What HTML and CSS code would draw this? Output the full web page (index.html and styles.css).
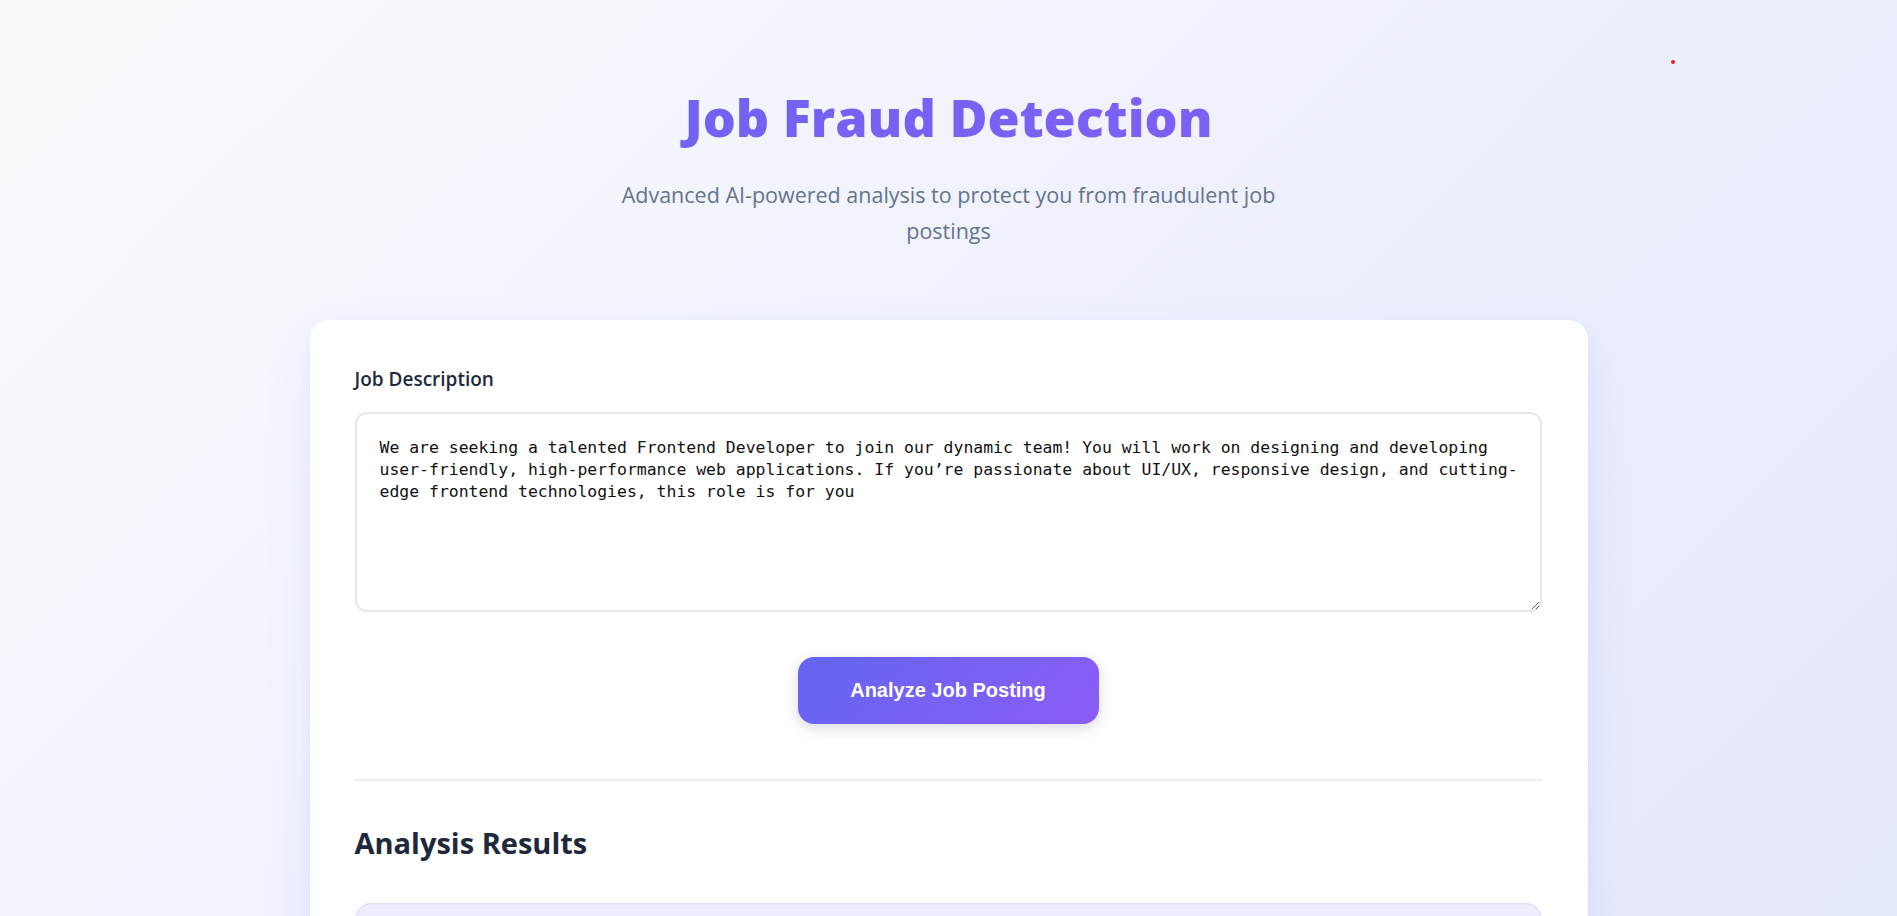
FILE: index.html
```html
<!DOCTYPE html>
<html lang="en">
<head>
<meta charset="utf-8">
<title>Job Fraud Detection</title>
<link rel="stylesheet" href="styles.css">
</head>
<body>
<span class="dot"></span>
<main class="page">
  <header class="hero">
    <h1 class="title">Job Fraud Detection</h1>
    <p class="subtitle">Advanced AI-powered analysis to protect you from fraudulent job postings</p>
  </header>
  <section class="card">
    <label class="label" for="desc">Job Description</label>
    <textarea id="desc" class="input">We are seeking a talented Frontend Developer to join our dynamic team! You will work on designing and developing user-friendly, high-performance web applications. If you’re passionate about UI/UX, responsive design, and cutting-edge frontend technologies, this role is for you</textarea>
    <div class="actions">
      <button class="btn" type="button">Analyze Job Posting</button>
    </div>
    <hr class="sep">
    <h2 class="results-title">Analysis Results</h2>
    <div class="result-box"></div>
  </section>
</main>
</body>
</html>
```

FILE: styles.css
```css
* { box-sizing: border-box; }
html, body { margin: 0; padding: 0; }
body {
  min-height: 100vh;
  font-family: "Open Sans", "Noto Sans", sans-serif;
  background: linear-gradient(135deg, #fafbfe 0%, #eff2fc 45%, #e4e8fc 100%);
  overflow: hidden;
}
.dot {
  position: absolute;
  left: 1671px;
  top: 60px;
  width: 4px;
  height: 4px;
  border-radius: 50%;
  background: #e81e1e;
}
.page {
  display: flex;
  flex-direction: column;
  align-items: center;
  padding-top: 86px;
}
.hero {
  width: 100%;
  display: flex;
  flex-direction: column;
  align-items: center;
}
.title {
  margin: 0;
  width: 100%;
  text-align: center;
  font-size: 52px;
  font-weight: 800;
  line-height: 62px;
  background: linear-gradient(135deg, #6366f1, #8b5cf6);
  -webkit-background-clip: text;
  background-clip: text;
  color: transparent;
}
.subtitle {
  margin: 29px 0 0;
  max-width: 700px;
  text-align: center;
  font-size: 21.5px;
  line-height: 36px;
  color: #64748b;
}
.card {
  margin-top: 71px;
  width: 1278px;
  background: rgba(255, 255, 255, 0.92);
  border-radius: 20px;
  box-shadow: 0 20px 50px rgba(99, 102, 241, 0.10), 0 4px 12px rgba(99, 102, 241, 0.05);
  padding: 46px 46px 40px 45px;
  display: flex;
  flex-direction: column;
}
.label {
  font-size: 19px;
  font-weight: 600;
  color: #1e293b;
  line-height: 26px;
  margin-bottom: 20px;
}
.input {
  display: block;
  width: 100%;
  height: 200px;
  border: 2px solid #e2e8f0;
  border-radius: 12px;
  padding: 23px 19px 20px 23px;
  font-family: "DejaVu Sans Mono", "Liberation Mono", monospace;
  font-size: 16.44px;
  line-height: 22.2px;
  color: #111;
  background: #fff;
  resize: vertical;
  outline: none;
}
.actions {
  display: flex;
  justify-content: center;
  margin-top: 45px;
}
.btn {
  width: 301px;
  height: 67px;
  border: none;
  border-radius: 16px;
  background: linear-gradient(135deg, #6366f1, #8b5cf6);
  color: #fff;
  font-family: "Liberation Sans", Arial, sans-serif;
  font-size: 20px;
  font-weight: 700;
  box-shadow: 0 4px 12px rgba(60, 60, 110, 0.18);
  cursor: pointer;
}
.sep {
  margin: 55px 0 0;
  border: none;
  border-top: 2px solid #efedfd;
}
.results-title {
  margin: 42px 0 0;
  font-size: 29px;
  font-weight: 700;
  color: #1e293b;
  line-height: 40px;
}
.result-box {
  margin-top: 40px;
  height: 120px;
  background: #f0edff;
  border: 2px solid #e6e1fc;
  border-radius: 16px;
}
```
